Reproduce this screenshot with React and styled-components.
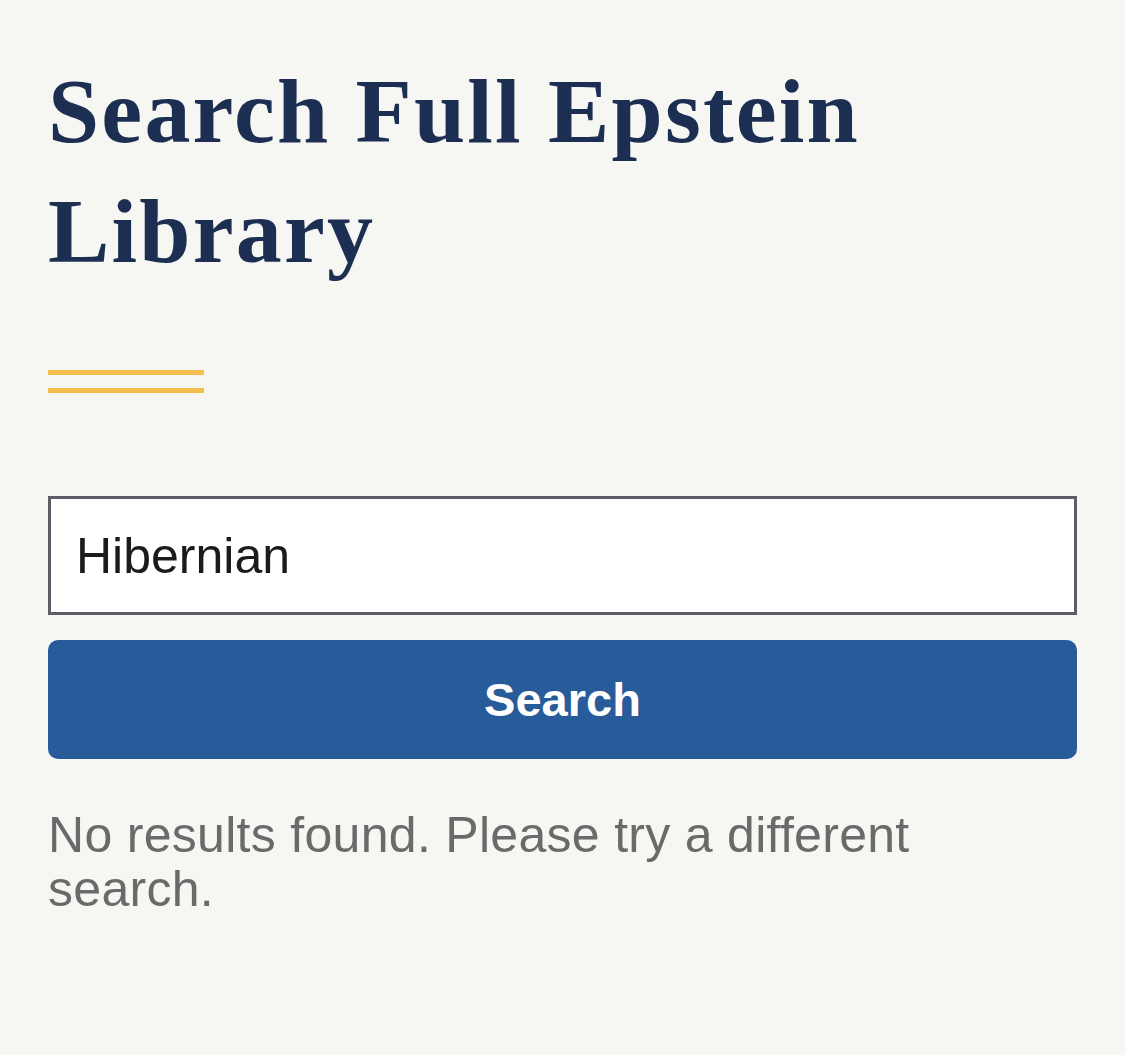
import React from 'react';
import styled, { createGlobalStyle } from 'styled-components';

const GlobalStyle = createGlobalStyle`
  html, body {
    margin: 0;
    padding: 0;
    background: #f6f6f3;
  }
`;

const Page = styled.main`
  padding: 51px 48px 60px;
  font-family: "Liberation Sans", Arial, sans-serif;
`;

const Title = styled.h1`
  margin: 0;
  font-family: "Liberation Serif", "Times New Roman", serif;
  font-weight: 700;
  font-size: 92px;
  line-height: 120px;
  letter-spacing: 2.2px;
  color: #1c2e51;
`;

const Rule = styled.div`
  margin-top: 79px;
  width: 156px;
  height: 23px;
  border-top: 5px solid #f5bf4e;
  border-bottom: 5px solid #f5bf4e;
  box-sizing: border-box;
`;

const Form = styled.form`
  margin-top: 103px;
  display: flex;
  flex-direction: column;
  gap: 25px;
`;

const SearchInput = styled.input`
  box-sizing: border-box;
  width: 100%;
  height: 119px;
  border: 3px solid #5b5e65;
  border-radius: 0;
  background: #fff;
  padding: 0 25px;
  font-family: "Liberation Sans", Arial, sans-serif;
  font-size: 50px;
  color: #1b1b1b;
  outline: none;
`;

const SearchButton = styled.button`
  height: 119px;
  border: none;
  border-radius: 10px;
  background: #285b9a;
  color: #fff;
  font-family: "Liberation Sans", Arial, sans-serif;
  font-weight: 700;
  font-size: 47px;
  cursor: pointer;
`;

const Message = styled.p`
  margin: 49px 0 0;
  font-size: 50px;
  line-height: 54px;
  letter-spacing: 0.3px;
  color: #6a6a6a;
`;

export default function App() {
  return (
    <>
      <GlobalStyle />
      <Page>
        <Title>Search Full Epstein Library</Title>
        <Rule />
        <Form onSubmit={e => e.preventDefault()}>
          <SearchInput defaultValue="Hibernian" />
          <SearchButton type="submit">Search</SearchButton>
        </Form>
        <Message>No results found. Please try a different search.</Message>
      </Page>
    </>
  );
}
